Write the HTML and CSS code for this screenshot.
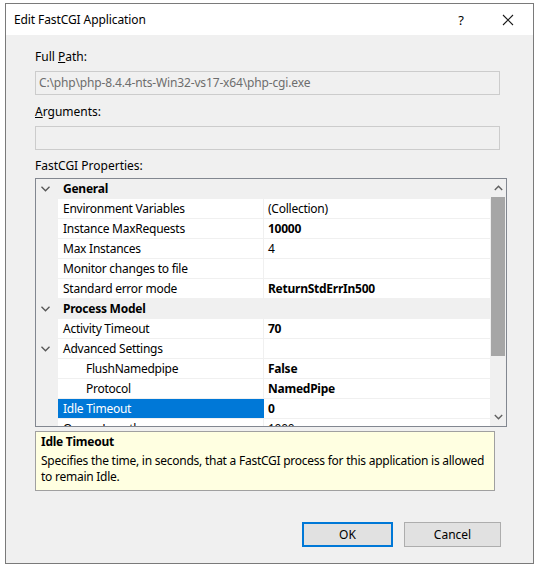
FILE: index.html
```html
<!DOCTYPE html>
<html lang="en">
<head>
  <meta charset="UTF-8">
  <title>Edit FastCGI Application</title>
  <link rel="stylesheet" href="styles.css">
</head>
<body>
  <div class="window">
    <div class="titlebar">
      <span class="title">Edit FastCGI Application</span>
      <span class="help">?</span>
      <svg class="close" width="12" height="12" viewBox="0 0 12 12">
        <path d="M1 1 L11 11 M11 1 L1 11" stroke="#1a1a1a" stroke-width="1.1" fill="none"/>
      </svg>
    </div>

    <div class="content">
      <label class="field-label">Full <u>P</u>ath:</label>
      <div class="textbox path">C:\php\php-8.4.4-nts-Win32-vs17-x64\php-cgi.exe</div>

      <label class="field-label"><u>A</u>rguments:</label>
      <div class="textbox args"></div>

      <label class="field-label grid-label">FastCGI Properties:</label>
      <div class="pgrid">
        <div class="rows">
          <div class="row category"><span class="exp"><svg width="9" height="6" viewBox="0 0 9 6"><polyline points="0.5,0.8 4.5,4.8 8.5,0.8" fill="none" stroke="#555" stroke-width="1.3"/></svg></span><span class="name">General</span></div>
          <div class="row"><span class="exp"></span><span class="name">Environment Variables</span><span class="value">(Collection)</span></div>
          <div class="row"><span class="exp"></span><span class="name">Instance MaxRequests</span><span class="value bold">10000</span></div>
          <div class="row"><span class="exp"></span><span class="name">Max Instances</span><span class="value">4</span></div>
          <div class="row"><span class="exp"></span><span class="name">Monitor changes to file</span><span class="value"></span></div>
          <div class="row"><span class="exp"></span><span class="name">Standard error mode</span><span class="value bold">ReturnStdErrIn500</span></div>
          <div class="row category"><span class="exp"><svg width="9" height="6" viewBox="0 0 9 6"><polyline points="0.5,0.8 4.5,4.8 8.5,0.8" fill="none" stroke="#555" stroke-width="1.3"/></svg></span><span class="name">Process Model</span></div>
          <div class="row"><span class="exp"></span><span class="name">Activity Timeout</span><span class="value bold">70</span></div>
          <div class="row"><span class="exp"><svg width="9" height="6" viewBox="0 0 9 6"><polyline points="0.5,0.8 4.5,4.8 8.5,0.8" fill="none" stroke="#555" stroke-width="1.3"/></svg></span><span class="name">Advanced Settings</span><span class="value"></span></div>
          <div class="row"><span class="exp"></span><span class="name nested">FlushNamedpipe</span><span class="value bold">False</span></div>
          <div class="row"><span class="exp"></span><span class="name nested">Protocol</span><span class="value bold">NamedPipe</span></div>
          <div class="row selected"><span class="exp"></span><span class="name">Idle Timeout</span><span class="value bold">0</span></div>
          <div class="row"><span class="exp"></span><span class="name">Queue Length</span><span class="value">1000</span></div>
        </div>
        <div class="scrollbar">
          <div class="arrow"><svg width="9" height="6" viewBox="0 0 9 6"><polyline points="0.8,5 4.5,1.3 8.2,5" fill="none" stroke="#606060" stroke-width="1.4"/></svg></div>
          <div class="track"><div class="thumb"></div></div>
          <div class="arrow"><svg width="9" height="6" viewBox="0 0 9 6"><polyline points="0.8,1 4.5,4.7 8.2,1" fill="none" stroke="#606060" stroke-width="1.4"/></svg></div>
        </div>
      </div>

      <div class="description">
        <div class="desc-title">Idle Timeout</div>
        <div class="desc-text">Specifies the time, in seconds, that a FastCGI process for this application is allowed to remain Idle.</div>
      </div>

      <div class="buttons">
        <button class="btn default">OK</button>
        <button class="btn">Cancel</button>
      </div>
    </div>
  </div>
</body>
</html>
```

FILE: styles.css
```css
body {
  margin: 0;
  background: #ffffff;
  font-family: "Noto Sans", "Open Sans", sans-serif;
  font-size: 12px;
  color: #000;
}
.window {
  margin: 3px 0 0 5px;
  width: 527px;
  height: 559px;
  border: 1px solid #7a7a7a;
  background: #f0f0f0;
  display: flex;
  flex-direction: column;
}
.titlebar {
  height: 31px;
  background: #ffffff;
  display: flex;
  align-items: center;
  padding-left: 8px;
}
.title {
  flex: 1;
  font-size: 12px;
  letter-spacing: -0.1px;
}
.help {
  font-size: 13px;
  margin-right: 38px;
}
.close {
  margin-right: 19px;
}
.content {
  padding: 14px 0 0 29px;
  flex: 1;
  display: flex;
  flex-direction: column;
}
.field-label {
  display: block;
  height: 16px;
  line-height: 16px;
  margin-bottom: 6px;
}
.grid-label {
  margin-bottom: 4px;
}
.textbox {
  width: 460px;
  height: 22px;
  border: 1px solid #cccccc;
  background: #f0f0f0;
  color: #6d6d6d;
  line-height: 22px;
  padding-left: 3px;
  letter-spacing: -0.15px;
}
.textbox.path {
  margin-bottom: 9px;
}
.textbox.args {
  margin-bottom: 8px;
}
.pgrid {
  width: 470px;
  height: 247px;
  border: 1px solid #828790;
  background: #ffffff;
  display: flex;
  overflow: hidden;
  letter-spacing: -0.25px;
}
.rows {
  flex: 1;
  overflow: hidden;
}
.row {
  height: 19px;
  border-bottom: 1px solid #f0f0f0;
  display: flex;
  line-height: 19px;
  white-space: nowrap;
}
.row .exp {
  width: 22px;
  flex: none;
  background: #f0f0f0;
  display: flex;
  align-items: center;
  justify-content: center;
  padding-right: 3px;
  box-sizing: border-box;
}
.row .name {
  width: 206px;
  flex: none;
  padding-left: 5px;
  box-sizing: border-box;
  border-right: 1px solid #f0f0f0;
}
.row .name.nested {
  padding-left: 28px;
}
.row .value {
  flex: 1;
  padding-left: 4px;
}
.bold {
  font-weight: bold;
}
.row.category {
  background: #f0f0f0;
}
.row.category .name {
  font-weight: bold;
  border-right: none;
}
.row.selected .name {
  background: #0078d7;
  color: #ffffff;
  border-right-color: #0078d7;
}
.scrollbar {
  width: 16px;
  flex: none;
  background: #f0f0f0;
  display: flex;
  flex-direction: column;
}
.scrollbar .arrow {
  height: 18px;
  display: flex;
  align-items: center;
  justify-content: center;
}
.track {
  flex: 1;
}
.thumb {
  height: 159px;
  background: #a6a6a6;
  margin: 0 1px;
}
.description {
  margin-top: 4px;
  width: 453px;
  height: 56px;
  border: 1px solid #a0a0a0;
  background: #ffffe1;
  padding: 2px 0 0 5px;
  letter-spacing: -0.25px;
}
.desc-title {
  font-weight: bold;
  line-height: 16px;
}
.desc-text {
  line-height: 16px;
  margin-top: 3px;
}
.buttons {
  display: flex;
  gap: 11px;
  margin-top: 31px;
  margin-left: 267px;
}
.btn {
  font-family: inherit;
  font-size: 12px;
  height: 25px;
  background: #e1e1e1;
  border: 1px solid #adadad;
  padding: 0;
  color: #000;
}
.btn.default {
  width: 91px;
  border: 2px solid #0078d7;
}
.btn:not(.default) {
  width: 97px;
}
```
